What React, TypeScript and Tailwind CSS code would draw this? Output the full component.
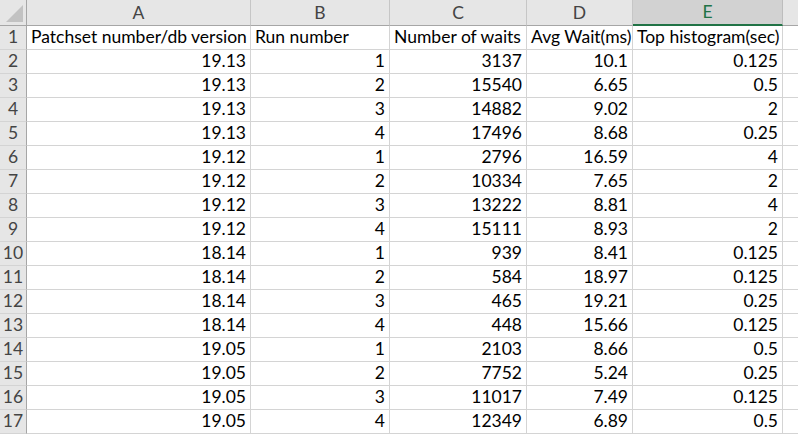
const columns = ["A", "B", "C", "D", "E"];

const header = [
  "Patchset number/db version",
  "Run number",
  "Number of waits",
  "Avg Wait(ms)",
  "Top histogram(sec)",
];

const rows: (string | number)[][] = [
  ["19.13", 1, 3137, "10.1", "0.125"],
  ["19.13", 2, 15540, "6.65", "0.5"],
  ["19.13", 3, 14882, "9.02", "2"],
  ["19.13", 4, 17496, "8.68", "0.25"],
  ["19.12", 1, 2796, "16.59", "4"],
  ["19.12", 2, 10334, "7.65", "2"],
  ["19.12", 3, 13222, "8.81", "4"],
  ["19.12", 4, 15111, "8.93", "2"],
  ["18.14", 1, 939, "8.41", "0.125"],
  ["18.14", 2, 584, "18.97", "0.125"],
  ["18.14", 3, 465, "19.21", "0.25"],
  ["18.14", 4, 448, "15.66", "0.125"],
  ["19.05", 1, 2103, "8.66", "0.5"],
  ["19.05", 2, 7752, "5.24", "0.25"],
  ["19.05", 3, 11017, "7.49", "0.125"],
  ["19.05", 4, 12349, "6.89", "0.5"],
];

const App = () => {
  return (
    <div className="w-[798px] h-[434px] overflow-hidden bg-white text-[17.5px] leading-[22px] text-black font-['Lato','Open_Sans',sans-serif]">
      <div className="grid grid-cols-[27px_224px_139px_137px_106px_150px_60px]">
        {/* Column headers */}
        <div className="h-[26px] bg-[#e6e6e6] border-r border-b border-[#a6a6a6] relative">
          <div className="absolute right-[3px] bottom-[3px] w-0 h-0 border-l-[17px] border-l-transparent border-b-[17px] border-b-[#c2c2c2]" />
        </div>
        {columns.map((c) => (
          <div
            key={c}
            className={
              c === "E"
                ? "h-[26px] bg-[#d2d2d2] border-r border-[#bdbdbd] border-b-2 border-b-[#217346] text-[#217346] flex items-center justify-center"
                : "h-[26px] bg-[#e6e6e6] border-r border-[#c6c6c6] border-b border-b-[#a6a6a6] text-[#444] flex items-center justify-center"
            }
          >
            {c}
          </div>
        ))}
        <div className="h-[26px] bg-[#e6e6e6] border-b border-[#a6a6a6]" />

        {/* Row 1: text labels */}
        <div className="h-[24px] bg-[#e6e6e6] border-r border-r-[#a6a6a6] border-b border-b-[#d4d4d4] text-[#444] flex items-end justify-center pb-px">
          1
        </div>
        {header.map((h) => (
          <div
            key={h}
            className="h-[24px] border-r border-b border-[#d4d4d4] flex items-end px-[4px] pb-px whitespace-nowrap"
          >
            {h}
          </div>
        ))}
        <div className="h-[24px] border-b border-[#d4d4d4]" />

        {/* Data rows */}
        {rows.map((r, i) => (
          <div key={i} className="contents">
            <div className="h-[24px] bg-[#e6e6e6] border-r border-r-[#a6a6a6] border-b border-b-[#d4d4d4] text-[#444] flex items-end justify-center pb-px">
              {i + 2}
            </div>
            {r.map((v, j) => (
              <div
                key={j}
                className="h-[24px] border-r border-b border-[#d4d4d4] flex items-end justify-end px-[4px] pb-px"
              >
                {v}
              </div>
            ))}
            <div className="h-[24px] border-b border-[#d4d4d4]" />
          </div>
        ))}
      </div>
    </div>
  );
};

export default App;
